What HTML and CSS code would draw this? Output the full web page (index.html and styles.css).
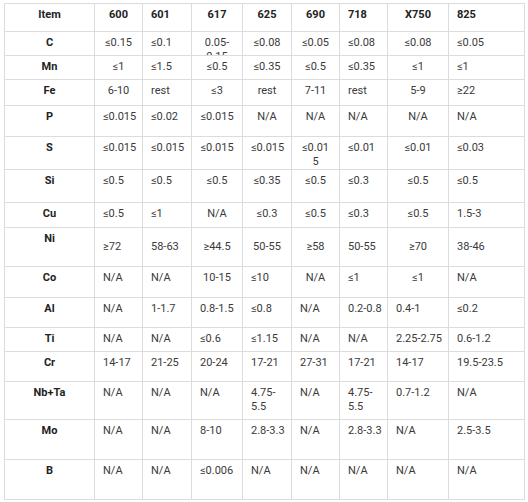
FILE: index.html
```html
<!DOCTYPE html>
<html>
<head>
<meta charset="utf-8">
<link rel="stylesheet" href="styles.css">
</head>
<body>
<table class="alloys">
<colgroup>
<col class="w90"><col class="w48"><col class="w49"><col class="w51"><col class="w49"><col class="w48"><col class="w48"><col class="w61"><col class="w76">
</colgroup>
<tr class="h28"><th>Item</th><th class="c">600</th><th>601</th><th class="c">617</th><th class="c">625</th><th class="c">690</th><th>718</th><th class="c">X750</th><th>825</th></tr>
<tr class="h24"><th>C</th><td class="c">≤0.15</td><td>≤0.1</td><td class="c"><div class="clip">0.05-<br>0.15</div></td><td class="c">≤0.08</td><td class="c">≤0.05</td><td>≤0.08</td><td class="c">≤0.08</td><td>≤0.05</td></tr>
<tr class="h24"><th>Mn</th><td class="c">≤1</td><td>≤1.5</td><td class="c">≤0.5</td><td class="c">≤0.35</td><td class="c">≤0.5</td><td>≤0.35</td><td class="c">≤1</td><td>≤1</td></tr>
<tr class="h26"><th>Fe</th><td class="c">6-10</td><td>rest</td><td class="c">≤3</td><td class="c">rest</td><td class="c">7-11</td><td>rest</td><td class="c">5-9</td><td>≥22</td></tr>
<tr class="h31"><th>P</th><td class="c">≤0.015</td><td>≤0.02</td><td class="c">≤0.015</td><td class="c">N/A</td><td class="c">N/A</td><td>N/A</td><td class="c">N/A</td><td>N/A</td></tr>
<tr class="h32"><th>S</th><td class="c">≤0.015</td><td>≤0.015</td><td class="c">≤0.015</td><td class="c">≤0.015</td><td class="c">≤0.01<br>5</td><td>≤0.01</td><td class="c">≤0.01</td><td>≤0.03</td></tr>
<tr class="h33"><th>Si</th><td>≤0.5</td><td>≤0.5</td><td class="c">≤0.5</td><td class="c">≤0.35</td><td class="c">≤0.5</td><td>≤0.3</td><td class="c">≤0.5</td><td>≤0.5</td></tr>
<tr class="h25"><th>Cu</th><td>≤0.5</td><td>≤1</td><td class="c">N/A</td><td class="c">≤0.3</td><td class="c">≤0.5</td><td>≤0.3</td><td class="c">≤0.5</td><td>1.5-3</td></tr>
<tr class="h39 mid"><th>Ni</th><td>≥72</td><td>58-63</td><td class="c">≥44.5</td><td class="c">50-55</td><td class="c">≥58</td><td>50-55</td><td class="c">≥70</td><td>38-46</td></tr>
<tr class="h31"><th>Co</th><td>N/A</td><td>N/A</td><td class="c">10-15</td><td>≤10</td><td class="c">N/A</td><td>≤1</td><td class="c">≤1</td><td>N/A</td></tr>
<tr class="h30"><th>Al</th><td>N/A</td><td>1-1.7</td><td>0.8-1.5</td><td>≤0.8</td><td>N/A</td><td>0.2-0.8</td><td>0.4-1</td><td>≤0.2</td></tr>
<tr class="h24"><th>Ti</th><td>N/A</td><td>N/A</td><td>≤0.6</td><td>≤1.15</td><td>N/A</td><td>N/A</td><td>2.25-2.75</td><td>0.6-1.2</td></tr>
<tr class="h30"><th>Cr</th><td>14-17</td><td>21-25</td><td>20-24</td><td>17-21</td><td>27-31</td><td>17-21</td><td>14-17</td><td>19.5-23.5</td></tr>
<tr class="h38"><th>Nb+Ta</th><td>N/A</td><td>N/A</td><td>N/A</td><td>4.75-<br>5.5</td><td>N/A</td><td>4.75-<br>5.5</td><td>0.7-1.2</td><td>N/A</td></tr>
<tr class="h40"><th>Mo</th><td>N/A</td><td>N/A</td><td>8-10</td><td>2.8-3.3</td><td>N/A</td><td>2.8-3.3</td><td>N/A</td><td>2.5-3.5</td></tr>
<tr class="h40"><th>B</th><td>N/A</td><td>N/A</td><td>≤0.006</td><td>N/A</td><td>N/A</td><td>N/A</td><td>N/A</td><td>N/A</td></tr>
</table>
</body>
</html>
```
FILE: styles.css
```css
html, body {
  margin: 0;
  padding: 0;
  background: #ffffff;
}
body {
  padding: 3px 0 0 4px;
  font-family: Roboto, "Liberation Sans", Arial, sans-serif;
  font-size: 11px;
  color: #3a3a3a;
}
.alloys {
  border-collapse: collapse;
  table-layout: fixed;
  width: 521px;
}
.alloys th, .alloys td {
  border: 1px solid #dcdcdc;
  padding: 4px 8px 0 8px;
  vertical-align: top;
  line-height: 14px;
  white-space: nowrap;
  text-align: left;
  overflow: hidden;
}
.alloys th {
  font-weight: 700;
  color: #222;
}
.alloys tr th:first-child {
  text-align: center;
}
.alloys .c { text-align: center; }
.alloys tr.mid td { vertical-align: middle; padding-top: 0; }
.clip {
  height: 19px;
  overflow: hidden;
}
.w90 { width: 90px; }
.w48 { width: 48px; }
.w49 { width: 49px; }
.w51 { width: 51px; }
.w61 { width: 61px; }
.w76 { width: 76px; }
.h24 { height: 24px; }
.h25 { height: 25px; }
.h26 { height: 26px; }
.h28 { height: 28px; }
.h30 { height: 30px; }
.h31 { height: 31px; }
.h32 { height: 32px; }
.h33 { height: 33px; }
.h38 { height: 38px; }
.h39 { height: 39px; }
.h40 { height: 40px; }
```
